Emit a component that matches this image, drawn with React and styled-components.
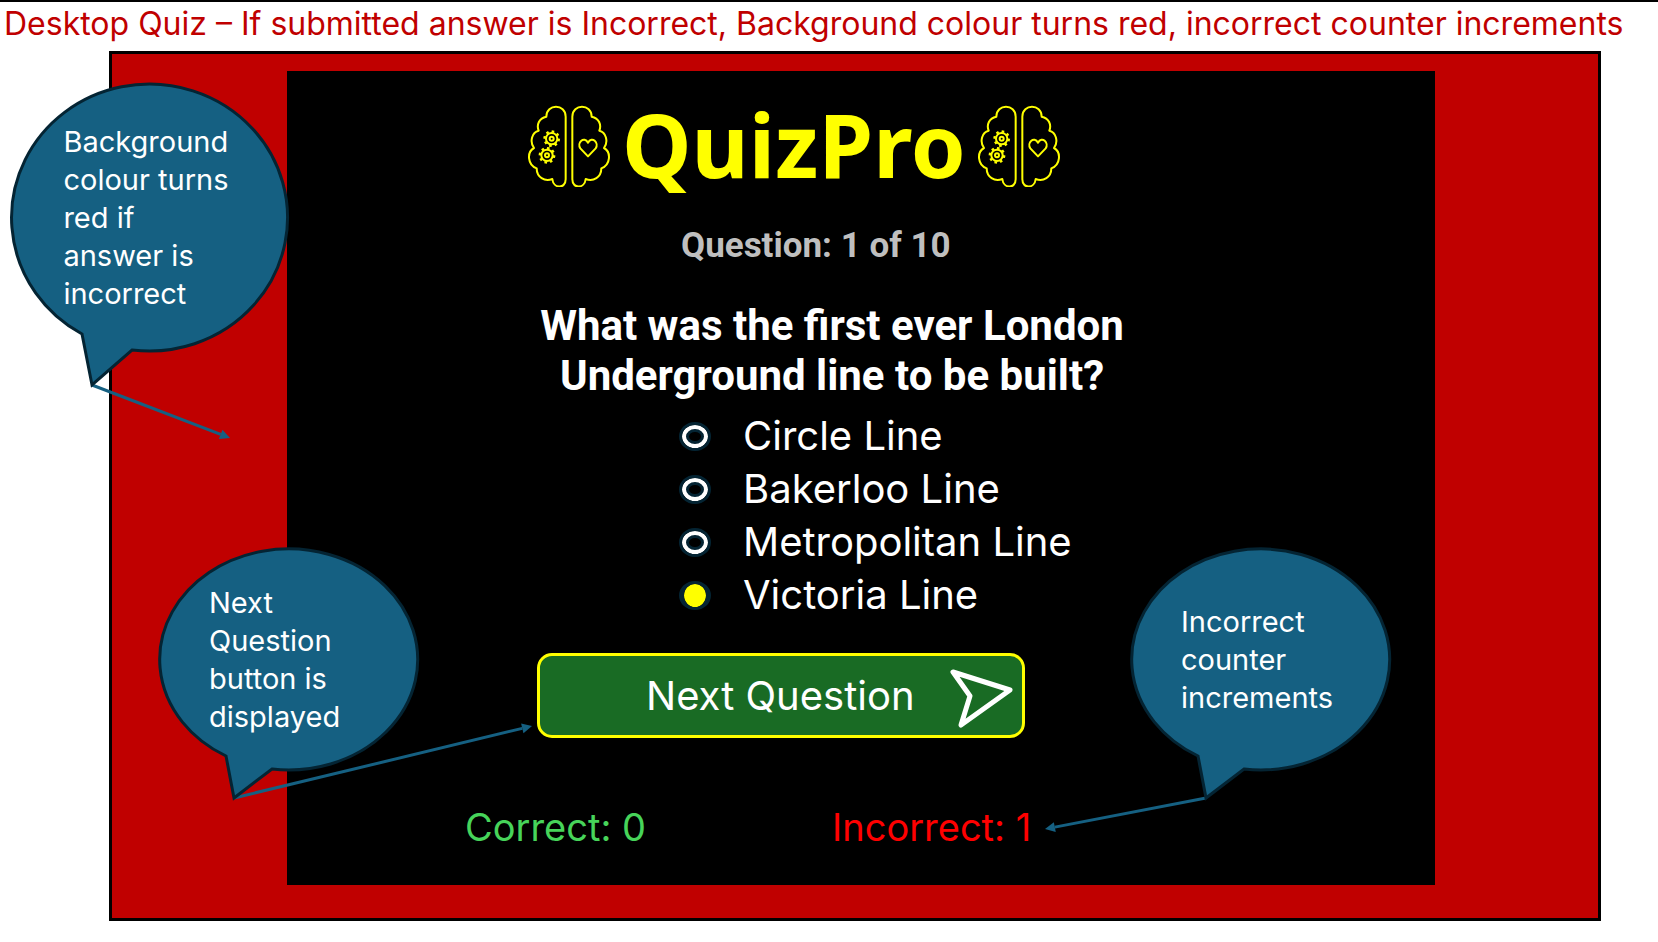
import React, { useState } from 'react';
import styled, { createGlobalStyle } from 'styled-components';

const colors = {
  incorrect: '#c00000',
  bubble: '#156082',
  outline: '#042433',
  accent: '#ffff00',
};

const GlobalStyle = createGlobalStyle`
  * { box-sizing: border-box; }
  body {
    margin: 0;
    background: #ffffff;
    font-family: Inter, "Liberation Sans", sans-serif;
  }
`;

const Page = styled.div`
  border-top: 2px solid #000000;
`;

const PageTitle = styled.h1`
  margin: 0;
  padding: 0 4px 5px;
  color: ${colors.incorrect};
  font-size: 32px;
  font-weight: 400;
  line-height: 44px;
`;

const Frame = styled.div`
  position: relative;
  margin: 0 57px 21px 109px;
  padding: 17px 163px 33px 175px;
  border: 3px solid #000000;
  background: ${colors.incorrect};
`;

const Panel = styled.main`
  position: relative;
  padding: 28px 0 35px;
  background: #000000;
  color: #ffffff;
`;

const Content = styled.form`
  display: flex;
  flex-direction: column;
  align-items: flex-start;
  width: 792px;
  max-width: 100%;
  margin: 0 auto;
`;

const Brand = styled.header`
  display: flex;
  align-items: center;
  gap: 11px;
  margin: 0 0 37px 62px;
  color: ${colors.accent};
`;

const BrandName = styled.h2`
  margin: 0;
  font-family: "Noto Sans", "Open Sans", sans-serif;
  font-size: 88px;
  font-weight: 700;
  line-height: 90px;
`;

const Progress = styled.p`
  margin: 0 0 35px 216px;
  color: #bfbfbf;
  font-family: Roboto, sans-serif;
  font-size: 35px;
  font-weight: 700;
  line-height: 40px;
`;

const Question = styled.h3`
  width: 600px;
  margin: 0 0 8px 67px;
  font-family: Roboto, sans-serif;
  font-size: 42px;
  font-weight: 700;
  line-height: 50px;
  text-align: center;
`;

const Options = styled.div`
  display: flex;
  flex-direction: column;
  margin: 0 0 32px 214px;
`;

const Option = styled.label`
  display: flex;
  align-items: center;
  gap: 32px;
  font-size: 40px;
  line-height: 53px;
  cursor: pointer;
`;

const Radio = styled.input`
  appearance: none;
  width: 32px;
  height: 29px;
  margin: 2px 0 0;
  border: 3px solid ${colors.outline};
  border-radius: 50%;
  background: #000000;
  box-shadow: inset 0 0 0 4px #ffffff, inset 0 0 0 7px ${colors.outline};

  &:checked {
    border-width: 3px 5px;
    background: ${colors.accent};
    background-clip: padding-box;
    box-shadow: none;
  }
`;

const NextButton = styled.button`
  display: flex;
  align-items: center;
  justify-content: space-between;
  width: 488px;
  height: 85px;
  margin: 0 0 66px 72px;
  padding: 0 8px 0 106px;
  border: 3px solid ${colors.accent};
  border-radius: 15px;
  background: #196b24;
  color: #ffffff;
  font-family: inherit;
  font-size: 40px;
  cursor: pointer;
`;

const Counters = styled.div`
  display: flex;
  gap: 186px;
  font-size: 38px;
  line-height: 46px;
`;

const Counter = styled.span`
  color: ${(p) => p.$color};
`;

const CalloutBox = styled.aside`
  position: absolute;
  top: ${(p) => p.$top};
  left: ${(p) => p.$left};
  display: flex;
  align-items: center;
  width: ${(p) => p.$width}px;
  height: ${(p) => p.$height}px;
`;

const CalloutArt = styled.svg`
  position: absolute;
  top: 0;
  left: 0;
  overflow: visible;
  pointer-events: none;
`;

const CalloutText = styled.p`
  position: relative;
  margin: 0 0 0 19%;
  color: #ffffff;
  font-size: 29px;
  line-height: 38px;
  white-space: pre-line;
`;

function Arrow({ from, to }) {
  const [x1, y1] = from;
  const [x2, y2] = to;
  const length = Math.hypot(x2 - x1, y2 - y1);
  const ux = (x2 - x1) / length;
  const uy = (y2 - y1) / length;
  const bx = x2 - ux * 10;
  const by = y2 - uy * 10;
  return (
    <g fill={colors.bubble} stroke="none">
      <line x1={x1} y1={y1} x2={bx} y2={by} stroke={colors.bubble} strokeWidth="3" />
      <polygon
        points={`${x2},${y2} ${bx - uy * 5},${by + ux * 5} ${bx + uy * 5},${by - ux * 5}`}
      />
    </g>
  );
}

function Callout({ top, left, width, height, tail, target, children }) {
  const [start, tip, end] = tail;
  return (
    <CalloutBox $top={top} $left={left} $width={width} $height={height}>
      <CalloutArt width={width} height={height} aria-hidden="true">
        <Arrow from={tip} to={target} />
        <path
          d={`M${start} A${width / 2} ${height / 2} 0 1 1 ${end} L${tip} Z`}
          fill={colors.bubble}
          stroke={colors.outline}
          strokeWidth="3"
        />
      </CalloutArt>
      <CalloutText>{children}</CalloutText>
    </CalloutBox>
  );
}

const hemisphere =
  'M167 80 C167 40 109 40 109 80 C87 84 79 105 86 122 C66 126 58 155 72 174 C50 186 52 225 80 235 C80 262 104 276 127 267 C130 297 167 297 167 268 Z';

function Gear({ x, y }) {
  return (
    <g transform={`translate(${x} ${y})`}>
      <circle r="17" />
      <circle r="6" />
      {[10, 55, 100, 145, 190, 235, 280, 325].map((angle) => (
        <line key={angle} x1="18" x2="25" y1="0" y2="0" strokeWidth="8" transform={`rotate(${angle})`} />
      ))}
    </g>
  );
}

function BrainIcon() {
  return (
    <svg
      width="84"
      height="86"
      viewBox="51 33 252 258"
      fill="none"
      stroke="currentColor"
      strokeWidth="6"
      strokeLinejoin="round"
      aria-hidden="true"
    >
      <path d={hemisphere} />
      <path d={hemisphere} transform="translate(354 0) scale(-1 1)" />
      <Gear x={125} y={146} />
      <Gear x={111} y={196} />
      <path d="M234 199 L211 175 C200 158 222 137 234 158 C246 137 268 158 257 175 Z" />
    </svg>
  );
}

function SendIcon() {
  return (
    <svg width="66" height="66" viewBox="0 0 66 66" fill="none" stroke="currentColor" strokeWidth="5" strokeLinejoin="round" aria-hidden="true">
      <path d="M5 9 L62 27 L13 62 L22 33 Z" />
    </svg>
  );
}

const answers = ['Circle Line', 'Bakerloo Line', 'Metropolitan Line', 'Victoria Line'];

const smallTail = [[66, 207], [74, 249], [112, 220]];

export default function App() {
  const [selected, setSelected] = useState('Victoria Line');

  return (
    <Page>
      <GlobalStyle />
      <PageTitle>
        Desktop Quiz – If submitted answer is Incorrect, Background colour turns red, incorrect counter increments
      </PageTitle>
      <Frame>
        <Panel>
          <Content onSubmit={(e) => e.preventDefault()}>
            <Brand>
              <BrainIcon />
              <BrandName>QuizPro</BrandName>
              <BrainIcon />
            </Brand>
            <Progress>Question: 1 of 10</Progress>
            <Question id="question">What was the first ever London Underground line to be built?</Question>
            <Options role="radiogroup" aria-labelledby="question">
              {answers.map((answer) => (
                <Option key={answer}>
                  <Radio
                    type="radio"
                    name="answer"
                    value={answer}
                    checked={selected === answer}
                    onChange={() => setSelected(answer)}
                  />
                  {answer}
                </Option>
              ))}
            </Options>
            <NextButton type="submit">
              Next Question
              <SendIcon />
            </NextButton>
            <Counters>
              <Counter $color="#47d45a">Correct: 0</Counter>
              <Counter $color="#ff0000">Incorrect: 1</Counter>
            </Counters>
          </Content>
          <Callout
            top="478px"
            left="calc(50% - 701px)"
            width={258}
            height={221}
            tail={smallTail}
            target={[372, 177]}
          >
            {'Next\nQuestion\nbutton is\ndisplayed'}
          </Callout>
          <Callout
            top="478px"
            left="calc(50% + 271px)"
            width={258}
            height={221}
            tail={smallTail}
            target={[-87, 280]}
          >
            {'Incorrect\ncounter\nincrements'}
          </Callout>
        </Panel>
        <Callout
          top="30px"
          left="-101px"
          width={276}
          height={267}
          tail={[[71, 250], [81, 301], [121, 266]]}
          target={[219, 354]}
        >
          {'Background\ncolour turns\nred if\nanswer is\nincorrect'}
        </Callout>
      </Frame>
    </Page>
  );
}
